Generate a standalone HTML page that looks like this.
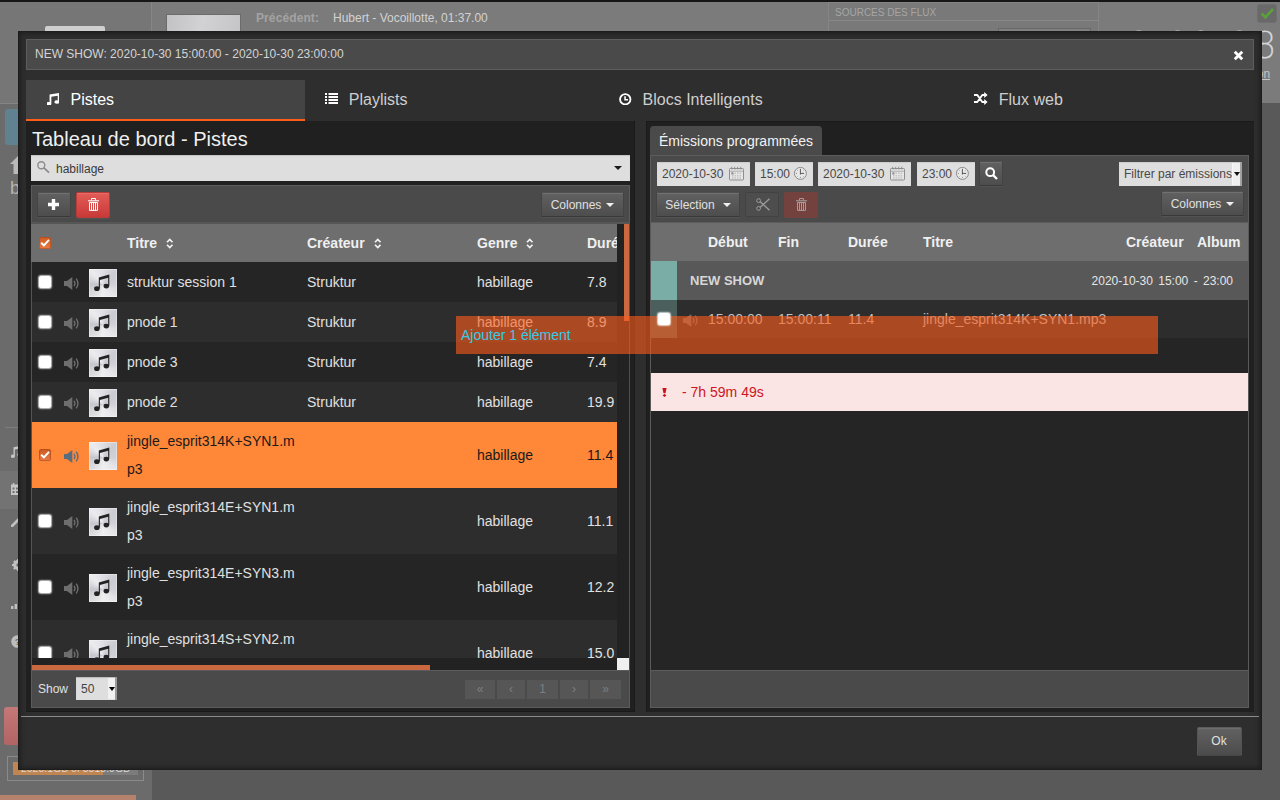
<!DOCTYPE html>
<html lang="fr">
<head>
<meta charset="utf-8">
<title>LibreTime - Ajouter / Supprimer le contenu</title>
<style>
*{box-sizing:border-box;margin:0;padding:0}
html,body{width:1280px;height:800px;overflow:hidden}
body{font-family:"Liberation Sans",Arial,sans-serif;font-size:13px;color:#e0e0e0;background:#595959;position:relative}
.abs{position:absolute}
/* ---------- dimmed page behind the modal ---------- */
#bg{position:absolute;left:0;top:0;width:1280px;height:800px;overflow:hidden;background:#595959}
#bg .topbar{left:0;top:0;width:1280px;height:103px;background:#7b7b7b}
#bg .blackline{left:0;top:0;width:1280px;height:2px;background:#161616}
#bg .side{left:0;top:0;width:152px;height:800px;background:#6b6b6b}
#bg .sidetop{left:0;top:2px;width:152px;height:101px;background:#767676;border-right:1px solid #868686}
/* ---------- dialog ---------- */
#dlg{position:absolute;left:18px;top:31px;width:1244px;height:739px;background:#2e2e2e;box-shadow:inset 0 0 5px 2px #1c1c1c, inset 0 0 0 1px #222}
#title{left:8px;top:8px;width:1228px;height:31px;background:#4a4a4a;border:1px solid #5e5e5e;color:#d4d4d4;font-size:12px;line-height:29px;padding-left:8px}

#close{left:1214.700px;top:18.500px;width:11px;height:11px}
/* tabs */
#tabs{left:8px;top:49px;width:1228px;height:41px;display:flex}
#tabs .tab{flex:1 1 auto;height:41px;padding:0 21px 0 20px;font-size:16px;line-height:40px;color:#cecece;white-space:nowrap;border-bottom:2px solid transparent}
#tabs .tab.active{background:#444;border-bottom:2px solid #ff5d1a;color:#fff}
#tabs .tab svg{display:inline-block;vertical-align:middle;position:relative;top:-2px}
/* left panel */
#lp{left:8px;top:90px;width:609px;height:591px;background:#202020;box-shadow:inset -1px -1px 0 #1a1a1a}
#lp h2{position:absolute;left:6px;top:6px;font-size:20px;font-weight:normal;color:#efefef;line-height:24px;white-space:nowrap}
#search{left:5px;top:34px;width:599px;height:26px;background:#dedede;box-shadow:inset 0 1px 1px #c4c4c4;color:#3a3a3a;font-size:12px;line-height:28px;padding-left:25px}
.tb{background:#4a4a4a;border:1px solid #5c5c5c}
#ltb{left:5px;top:64px;width:599px;height:38px}
.btn{position:absolute;margin:-.5px 0 0 -1px;height:25px;border:1px solid #3c3c3c;border-color:#505050 #444 #393939 #444;border-radius:1.500px;background:linear-gradient(#616161,#4d4d4d);box-shadow:inset 0 1px 0 rgba(255,255,255,.10),0 1px 0 rgba(255,255,255,.05);color:#e0e0e0;font-size:12px;line-height:25px;text-align:center;white-space:nowrap}
.btn.red{background:linear-gradient(#e35c58,#c83a37);border-color:#b93b38}
.caret{display:inline-block;width:0;height:0;border-left:4px solid transparent;border-right:4px solid transparent;border-top:4px solid #f0f0f0;vertical-align:middle;margin-left:5px;position:relative;top:0}

/* left table */
#lt{left:6px;top:103px;width:585px;height:434px;overflow:hidden;background:#252525}
#lt .hd{position:absolute;left:0;top:0;width:585px;height:38px;background:#6e6e6e;font-weight:bold;font-size:14px;color:#f0f0f0;line-height:38px}
#lt .r{position:absolute;left:0;width:585px;font-size:14px;color:#e0e0e0;line-height:28px}
#lt .r.e{background:#2d2d2d}
#lt .r.o{background:#252525}
#lt .r.sel{background:#ff8738;color:#1a1a1a}
#lt .c{position:absolute;white-space:nowrap;top:50%;transform:translateY(-50%)}
#lt .c1{left:95px}#lt .c2{left:275px}#lt .c3{left:445px}#lt .c4{left:555px}
#lt .hd .c{top:0;transform:none}
.cb{position:absolute;left:7px;width:12px;height:12px;background:#fff;border-radius:2.5px;box-shadow:0 0 1.500px .5px rgba(255,255,255,.75);top:50%;margin-top:-6px}
.cb.on{left:7px;width:12px;height:12px;margin-top:-6px;background:linear-gradient(#cf5a22,#e67c47);box-shadow:inset 0 0 0 1px rgba(170,70,20,.55)}
.spk{position:absolute;left:32px;top:50%;margin-top:-5.500px;width:16px;height:13px}
.th{position:absolute;left:57px;top:50%;margin-top:-13px;width:28px;height:28px;background:conic-gradient(from 0deg at 50% 55%,#dedee3 0deg,#cbcbd2 45deg,#d0d0d7 90deg,#e6e6ea 135deg,#efeff0 180deg,#dcdce0 225deg,#c6c6ce 270deg,#ececf0 318deg,#dedee3 360deg);box-shadow:inset 0 0 0 1px rgba(255,255,255,.35)}
.th svg{position:absolute;left:0;top:0}
.srt{display:inline-block;vertical-align:middle;margin-left:9px;position:relative;top:-1px}
#vtrack{left:591px;top:103px;width:12px;height:434px;background:#222}
#vthumb{left:598px;top:103px;width:5px;height:97px;background:#ca6840}
#htrack{left:6px;top:537px;width:585px;height:12px;background:#222}
#hthumb{left:6px;top:544px;width:398px;height:5px;background:#ca6840}
#corner{left:591px;top:537px;width:12px;height:12px;background:#f0f0f0}
#lft{left:5px;top:549px;width:599px;height:38px;font-size:13px;color:#e0e0e0}

/* right panel */
#rp{left:628px;top:90px;width:608px;height:591px;background:#202020;box-shadow:inset 1px 1px 0 #1a1a1a}
#rtab{left:4px;top:5px;width:172px;height:30px;background:#4a4a4a;border-radius:4px 4px 0 0;font-size:14px;line-height:31px;color:#f2f2f2;padding-left:9px;white-space:nowrap}
#rtb{left:4px;top:34px;width:599px;height:68px}
.inp{position:absolute;top:6px;height:24px;background:#dedede;box-shadow:inset 0 1px 1px #cdcdcd;color:#484848;font-size:12px;line-height:24px;padding-left:5px;white-space:nowrap}
.inp svg{position:absolute;top:4px}
#rt{left:4px;top:102px;width:599px;height:447px;background:#252525;overflow:hidden;border-left:1px solid #5a5a5a;border-right:1px solid #5a5a5a}
#rt .hd{position:absolute;left:0;top:0;width:598px;height:38px;background:#6e6e6e;font-weight:bold;font-size:14px;color:#f0f0f0;line-height:38px}
#rt .hd span{position:absolute;top:0;white-space:nowrap}
#rt .show{position:absolute;left:0;top:38px;width:598px;height:39px;background:#585858;line-height:39px;font-size:13px;color:#e6e6e6}
#rt .show b{position:absolute;left:39px;color:#d6d6d6}
#rt .show i{position:absolute;left:0;top:0;width:26px;height:39px;background:#7aada5}
#rt .show span{position:absolute;right:16px;top:1.300px;font-size:12px;word-spacing:2px}
#rt .trk{position:absolute;left:0;top:77px;width:598px;height:38px;background:#2d2d2d;line-height:38px;font-size:14px;color:#c2c2c2}
#rt .trk i{position:absolute;left:0;top:0;width:26px;height:38px;background:#4b5f5c}
#rt .trk span{position:absolute;top:0;white-space:nowrap}
#rt .warn{position:absolute;left:0;top:150px;width:598px;height:38px;background:#fae4e4;color:#cf141b;font-size:14px;line-height:38px}
#rt .warn span{position:absolute;left:31px}
#rft{left:4px;top:549px;width:599px;height:38px}
#sep{left:3px;top:685px;width:1238px;height:1px;background:#8c8c8c}
#ok{left:1179.500px;top:696.500px;width:45px;height:29px;line-height:26px;font-size:12px;background:linear-gradient(#626262,#4b4b4b);border-color:#5c5c5c #535353 #474747 #555;box-shadow:inset 0 1px 0 rgba(255,255,255,.08)}
#helper{position:absolute;left:456px;top:316px;width:702px;height:38px;background:rgba(255,93,26,.6);color:#33cbe8;font-size:14px;line-height:38px;padding-left:5px;z-index:50}

.sel50{position:absolute;left:44px;top:6px;width:41px;height:23px;background:#dedede;box-shadow:inset 0 1px 1px #bbb;color:#444;font-size:12px;line-height:25px;padding-left:5px}
.sel50 i{position:absolute;right:2px;top:1px;width:7px;height:21px;background:#f1f1f1}
.sel50 b{position:absolute;right:2.500px;top:10px;border-left:3.500px solid transparent;border-right:3.500px solid transparent;border-top:4px solid #000}
.sel50:after{content:"";position:absolute;right:0;top:0;width:2px;height:23px;background:#9a9a9a}
.pg{position:absolute;top:8.500px;height:19.500px;background:#565656;color:#7e7e7e;font-size:12px;line-height:19px;text-align:center}
</style>
</head>
<body>
<div id="bg">
  <div class="abs topbar"></div>
  <div class="abs side"></div>
  <div class="abs sidetop"></div>
  <div class="abs blackline"></div>
  <div class="abs" style="left:45px;top:26px;width:60px;height:10px;background:#cfcfcf;border-radius:2px 2px 0 0"></div>
  <div class="abs" style="left:166px;top:14px;width:75px;height:40px;background:linear-gradient(100deg,#c2c2c6,#d2d2d4 45%,#c4c4c8);border:1px solid #6c6c6c"></div>
  <div class="abs" style="left:256px;top:10.700px;font-size:12px;font-weight:bold;color:#a3a3a3;line-height:14px;letter-spacing:.1px">Précédent:</div>
  <div class="abs" style="left:333px;top:10.700px;font-size:12px;color:#d2d2d2;line-height:14px;white-space:nowrap">Hubert - Vocoillotte, 01:37.00</div>
  <div class="abs" style="left:828px;top:2px;width:271px;height:70px;background:#797979;border:1px solid #858585">
    <div style="height:18px;border-bottom:1px solid #898989;font-size:10px;line-height:19px;padding-left:6px;color:#a6a6a6">SOURCES DES FLUX</div>
    <div class="abs" style="left:169px;top:25px;width:93px;height:20px;border:1px solid #666;background:#818181"></div>
  </div>
  <div class="abs" style="left:1257px;top:4px;width:20px;height:19px;background:#696969;border-radius:3px;border:1px solid #6f6f6f"><svg width="18" height="17" viewBox="0 0 18 17" style="display:block"><path d="M3.500 8.500L7.400 12.300L15 4" fill="none" stroke="#5ca03a" stroke-width="2.600"/></svg></div>
  <div class="abs" style="left:1100px;top:23.500px;width:177.500px;text-align:right;font-size:37px;line-height:44px;color:#d3d3d8;white-space:nowrap;font-family:'DejaVu Sans Light','DejaVu Sans','Liberation Sans',sans-serif;font-weight:200;letter-spacing:1px">13:02:38</div>
  <div class="abs" style="left:1200px;top:67px;width:70px;text-align:right;font-size:12px;line-height:14px;color:#c4c4c4;text-decoration:underline;white-space:nowrap">Déconnexion</div>
  <div class="abs" style="left:0;top:103px;width:152px;height:1px;background:#858585"></div>
  <div class="abs" style="left:5px;top:109px;width:142px;height:36px;background:#5f8190;border-radius:3px"></div>
  <svg class="abs" style="left:10px;top:156px" width="16" height="18" viewBox="0 0 16 18"><path d="M8 0L16 8H12.500V18H3.500V8H0Z" fill="#b9b9b9"/></svg>
  <div class="abs" style="left:10px;top:178px;font-size:18px;line-height:20px;color:#b4b4b4">bibliothèque</div>
  <div class="abs" style="left:5px;top:427px;width:142px;height:1px;background:#7e7e7e"></div>
  <div class="abs" style="left:0;top:471px;width:152px;height:38px;background:#737373"></div>
  <svg class="abs" style="left:9px;top:444.500px" width="14" height="14" viewBox="0 0 14 14"><path d="M4.500 2.200 L12.300 0.800 V9.600 A2 1.700 0 1 1 10.900 8 V3.600 L5.900 4.500 V11.300 A2 1.700 0 1 1 4.500 9.700 Z" fill="#c6c6c6"/></svg>
  <svg class="abs" style="left:11px;top:483px" width="12" height="12" viewBox="0 0 12 12"><path d="M0 1.500H12V12H0Z" fill="#c6c6c6"/><path d="M2.500 0V2.500M9.500 0V2.500" stroke="#c6c6c6" stroke-width="1.500"/><path d="M1.500 4.500h2v2h-2zM5 4.500h2v2H5zM8.500 4.500h2v2h-2zM1.500 8h2v2h-2zM5 8h2v2H5zM8.500 8h2v2h-2z" fill="#737373"/></svg>
  <svg class="abs" style="left:11px;top:515px" width="12" height="12" viewBox="0 0 12 12"><path d="M1 11L9 3" stroke="#c0c0c0" stroke-width="2.600" stroke-linecap="round"/><circle cx="9.500" cy="2.500" r="2.400" fill="#c0c0c0"/></svg>
  <svg class="abs" style="left:12px;top:559px" width="12" height="12" viewBox="0 0 12 12"><circle cx="6" cy="6" r="3.600" fill="none" stroke="#c0c0c0" stroke-width="2.600"/><path d="M6 0V12M0 6H12M1.800 1.800L10.200 10.200M10.200 1.800L1.800 10.200" stroke="#c0c0c0" stroke-width="1.800"/><circle cx="6" cy="6" r="1.700" fill="#6b6b6b"/></svg>
  <svg class="abs" style="left:11px;top:599px" width="12" height="10" viewBox="0 0 12 10"><path d="M0 7h2.400v3H0zM3.600 5h2.400v5H3.600zM7.200 2.500h2.400V10H7.200z" fill="#c0c0c0"/></svg>
  <svg class="abs" style="left:11px;top:635px" width="13" height="13" viewBox="0 0 13 13"><circle cx="6.500" cy="6.500" r="6.300" fill="#bdbdbd"/><text x="6.500" y="10" font-size="9" font-weight="bold" text-anchor="middle" fill="#6b6b6b" font-family="Liberation Sans,sans-serif">?</text></svg>
  <div class="abs" style="left:4px;top:707px;width:143px;height:38px;border-radius:3px;background:linear-gradient(#c47878,#b26464)"></div>
  <div class="abs" style="left:7px;top:756px;width:137px;height:25px;border:1px solid #8a8a8a">
    <div class="abs" style="left:5px;top:5px;width:125px;height:13px;background:#7c7c7c"></div>
    <div class="abs" style="left:5px;top:5px;width:90px;height:13px;background:#c08550"></div>
    <div class="abs" style="left:5px;top:5px;width:125px;height:13px;font-size:10.500px;line-height:13px;text-align:center;color:#d8d8d8;white-space:nowrap">2025.1GB of 3518.9GB</div>
  </div>
  <div class="abs" style="left:0;top:795px;width:136px;height:5px;background:#b5826e"></div>
</div>
<div id="dlg">
  <div id="title" class="abs">NEW SHOW: 2020-10-30 15:00:00 - 2020-10-30 23:00:00</div>

  <svg id="close" class="abs" viewBox="0 0 10 10"><path d="M1.6 1.6 L8.4 8.4 M8.4 1.6 L1.6 8.4" stroke="#fff" stroke-width="2.6" stroke-linecap="butt"/></svg>
  <div id="tabs" class="abs">
    <div class="tab active"><svg width="12.500" height="12.500" viewBox="2.500 0.800 9.800 12.200" preserveAspectRatio="none" style="margin-left:.5px;margin-right:11.500px"><path d="M4.500 2.200 L12.300 0.800 V9.600 A2 1.700 0 1 1 10.900 8 V3.600 L5.900 4.500 V11.300 A2 1.700 0 1 1 4.500 9.700 Z" fill="#fff"/></svg>Pistes</div>
    <div class="tab"><svg width="13" height="12" viewBox="0 0 13 12" style="margin-right:10.500px"><path d="M0 1h2v2H0zM3.500 1H13v2H3.500zM0 4h2v2H0zM3.500 4H13v2H3.500zM0 7h2v2H0zM3.500 7H13v2H3.500zM0 10h2v2H0zM3.500 10H13v2H3.500z" fill="#fff" transform="translate(0,-1)"/></svg>Playlists</div>
    <div class="tab"><svg width="12.500" height="12.500" viewBox="0 0 13 13" style="margin-left:.6px;margin-right:10.800px"><circle cx="6.500" cy="6.500" r="5.400" fill="none" stroke="#fff" stroke-width="1.900"/><path d="M6.300 3.400V7H9.300" fill="none" stroke="#fff" stroke-width="1.600"/></svg>Blocs Intelligents</div>
    <div class="tab"><svg width="13.600" height="13" viewBox="0 -0.500 13.600 13" style="margin-left:.6px;margin-right:10.700px"><path d="M0 2.500H3.300L8.300 9.500H10.800M0 9.500H3.300L8.300 2.500H10.800" fill="none" stroke="#fff" stroke-width="1.900" stroke-linejoin="round"/><path d="M10.200 -0.400L13.600 2.500L10.200 5.400zM10.200 6.600L13.600 9.500L10.200 12.400z" fill="#fff"/></svg>Flux web</div>
  </div>
  <div id="lp" class="abs">
    <h2>Tableau de bord - Pistes</h2>
    <div id="search" class="abs"><svg width="13" height="13" viewBox="0 0 13 13" style="position:absolute;left:6px;top:6px"><circle cx="4.300" cy="4.300" r="3.500" fill="none" stroke="#8c8c8c" stroke-width="1.400"/><path d="M6.900 6.900L12 11.700" stroke="#8c8c8c" stroke-width="1.800"/></svg>habillage<span style="position:absolute;right:8px;top:11px;border-left:4px solid transparent;border-right:4px solid transparent;border-top:4px solid #1a1a1a"></span></div>
    <div id="ltb" class="abs tb">
      <div class="btn" style="left:6px;top:6px;width:34px"><svg width="11" height="11" viewBox="0 0 11 11" style="position:absolute;left:10px;top:6px"><path d="M3.800 0h3.400v3.800H11v3.400H7.200V11H3.800V7.200H0V3.800h3.800z" fill="#fff"/></svg></div>
      <div class="btn red" style="left:45px;top:6px;width:34px;height:26px"><svg width="11" height="13" viewBox="0 0 11 13" style="position:absolute;left:11px;top:5px"><path d="M3.500 2.300V0.500H7.500V2.300" fill="none" stroke="#fff" stroke-width="1"/><path d="M0 2.800H11" stroke="#fff" stroke-width="1.100"/><path d="M1.500 4.500H9.500V12.400H1.500Z" fill="none" stroke="#fff" stroke-width="1"/><path d="M3.500 4.500V12.400M5.500 4.500V12.400M7.500 4.500V12.400" stroke="#fff" stroke-width="1"/></svg></div>
      <div class="btn" style="left:510px;top:6px;width:83px">Colonnes<span class="caret"></span></div>
    </div>
    <div id="lt" class="abs">
    <div class="hd"><span class="cb on" style="top:19px"><svg width="12" height="12" viewBox="0 0 12 12" style="display:block"><path d="M2.200 5.800L4.900 8.400L10 2.900" fill="none" stroke="#fff" stroke-width="2"/></svg></span><span class="c c1">Titre<svg class="srt" width="7.500" height="11" viewBox="0 0 8 12"><path d="M1 4.600L4 1.600L7 4.600M1 7.400L4 10.400L7 7.400" fill="none" stroke="#f4f4f4" stroke-width="1.800"/></svg></span><span class="c c2">Créateur<svg class="srt" width="7.500" height="11" viewBox="0 0 8 12"><path d="M1 4.600L4 1.600L7 4.600M1 7.400L4 10.400L7 7.400" fill="none" stroke="#f4f4f4" stroke-width="1.800"/></svg></span><span class="c c3">Genre<svg class="srt" width="7.500" height="11" viewBox="0 0 8 12"><path d="M1 4.600L4 1.600L7 4.600M1 7.400L4 10.400L7 7.400" fill="none" stroke="#f4f4f4" stroke-width="1.800"/></svg></span><span class="c c4">Durée</span></div>
    <div class="r o" style="top:38px;height:40px"><span class="cb"></span><svg class="spk" viewBox="0 0 16 13"><path d="M0 4h3L8.300 0V13L3 9H0z" fill="#6e6e6e"/><path d="M10 3.800Q11.800 6.500 10 9.200M12.200 1.600Q15.600 6.500 12.200 11.400" fill="none" stroke="#6e6e6e" stroke-width="1.400"/></svg><div class="th"><svg width="28" height="28" viewBox="0 0 28 28"><path d="M9.800 8.400L20.300 5.400V16.800H19.200V8.800L10.900 11.100V19.400H9.800Z" fill="#222"/><ellipse cx="7.900" cy="19.700" rx="2.800" ry="2.400" fill="#222"/><ellipse cx="17.300" cy="17.100" rx="2.800" ry="2.400" fill="#222"/></svg></div><span class="c c1">struktur session 1</span><span class="c c2">Struktur</span><span class="c c3">habillage</span><span class="c c4">7.8</span></div>
    <div class="r e" style="top:78px;height:40px"><span class="cb"></span><svg class="spk" viewBox="0 0 16 13"><path d="M0 4h3L8.300 0V13L3 9H0z" fill="#6e6e6e"/><path d="M10 3.800Q11.800 6.500 10 9.200M12.200 1.600Q15.600 6.500 12.200 11.400" fill="none" stroke="#6e6e6e" stroke-width="1.400"/></svg><div class="th"><svg width="28" height="28" viewBox="0 0 28 28"><path d="M9.800 8.400L20.300 5.400V16.800H19.200V8.800L10.900 11.100V19.400H9.800Z" fill="#222"/><ellipse cx="7.900" cy="19.700" rx="2.800" ry="2.400" fill="#222"/><ellipse cx="17.300" cy="17.100" rx="2.800" ry="2.400" fill="#222"/></svg></div><span class="c c1">pnode 1</span><span class="c c2">Struktur</span><span class="c c3">habillage</span><span class="c c4">8.9</span></div>
    <div class="r o" style="top:118px;height:40px"><span class="cb"></span><svg class="spk" viewBox="0 0 16 13"><path d="M0 4h3L8.300 0V13L3 9H0z" fill="#6e6e6e"/><path d="M10 3.800Q11.800 6.500 10 9.200M12.200 1.600Q15.600 6.500 12.200 11.400" fill="none" stroke="#6e6e6e" stroke-width="1.400"/></svg><div class="th"><svg width="28" height="28" viewBox="0 0 28 28"><path d="M9.800 8.400L20.300 5.400V16.800H19.200V8.800L10.900 11.100V19.400H9.800Z" fill="#222"/><ellipse cx="7.900" cy="19.700" rx="2.800" ry="2.400" fill="#222"/><ellipse cx="17.300" cy="17.100" rx="2.800" ry="2.400" fill="#222"/></svg></div><span class="c c1">pnode 3</span><span class="c c2">Struktur</span><span class="c c3">habillage</span><span class="c c4">7.4</span></div>
    <div class="r e" style="top:158px;height:40px"><span class="cb"></span><svg class="spk" viewBox="0 0 16 13"><path d="M0 4h3L8.300 0V13L3 9H0z" fill="#6e6e6e"/><path d="M10 3.800Q11.800 6.500 10 9.200M12.200 1.600Q15.600 6.500 12.200 11.400" fill="none" stroke="#6e6e6e" stroke-width="1.400"/></svg><div class="th"><svg width="28" height="28" viewBox="0 0 28 28"><path d="M9.800 8.400L20.300 5.400V16.800H19.200V8.800L10.900 11.100V19.400H9.800Z" fill="#222"/><ellipse cx="7.900" cy="19.700" rx="2.800" ry="2.400" fill="#222"/><ellipse cx="17.300" cy="17.100" rx="2.800" ry="2.400" fill="#222"/></svg></div><span class="c c1">pnode 2</span><span class="c c2">Struktur</span><span class="c c3">habillage</span><span class="c c4">19.9</span></div>
    <div class="r sel" style="top:198px;height:66px"><span class="cb on"><svg width="12" height="12" viewBox="0 0 12 12" style="display:block"><path d="M2.200 5.800L4.900 8.400L10 2.900" fill="none" stroke="#fff" stroke-width="2"/></svg></span><svg class="spk" viewBox="0 0 16 13"><path d="M0 4h3L8.300 0V13L3 9H0z" fill="#5b6d7c"/><path d="M10 3.800Q11.800 6.500 10 9.200M12.200 1.600Q15.600 6.500 12.200 11.400" fill="none" stroke="#5b6d7c" stroke-width="1.400"/></svg><div class="th"><svg width="28" height="28" viewBox="0 0 28 28"><path d="M9.800 8.400L20.300 5.400V16.800H19.200V8.800L10.900 11.100V19.400H9.800Z" fill="#222"/><ellipse cx="7.900" cy="19.700" rx="2.800" ry="2.400" fill="#222"/><ellipse cx="17.300" cy="17.100" rx="2.800" ry="2.400" fill="#222"/></svg></div><span class="c c1">jingle_esprit314K+SYN1.m<br>p3</span><span class="c c2"></span><span class="c c3">habillage</span><span class="c c4">11.4</span></div>
    <div class="r e" style="top:264px;height:66px"><span class="cb"></span><svg class="spk" viewBox="0 0 16 13"><path d="M0 4h3L8.300 0V13L3 9H0z" fill="#6e6e6e"/><path d="M10 3.800Q11.800 6.500 10 9.200M12.200 1.600Q15.600 6.500 12.200 11.400" fill="none" stroke="#6e6e6e" stroke-width="1.400"/></svg><div class="th"><svg width="28" height="28" viewBox="0 0 28 28"><path d="M9.800 8.400L20.300 5.400V16.800H19.200V8.800L10.900 11.100V19.400H9.800Z" fill="#222"/><ellipse cx="7.900" cy="19.700" rx="2.800" ry="2.400" fill="#222"/><ellipse cx="17.300" cy="17.100" rx="2.800" ry="2.400" fill="#222"/></svg></div><span class="c c1">jingle_esprit314E+SYN1.m<br>p3</span><span class="c c2"></span><span class="c c3">habillage</span><span class="c c4">11.1</span></div>
    <div class="r o" style="top:330px;height:66px"><span class="cb"></span><svg class="spk" viewBox="0 0 16 13"><path d="M0 4h3L8.300 0V13L3 9H0z" fill="#6e6e6e"/><path d="M10 3.800Q11.800 6.500 10 9.200M12.200 1.600Q15.600 6.500 12.200 11.400" fill="none" stroke="#6e6e6e" stroke-width="1.400"/></svg><div class="th"><svg width="28" height="28" viewBox="0 0 28 28"><path d="M9.800 8.400L20.300 5.400V16.800H19.200V8.800L10.900 11.100V19.400H9.800Z" fill="#222"/><ellipse cx="7.900" cy="19.700" rx="2.800" ry="2.400" fill="#222"/><ellipse cx="17.300" cy="17.100" rx="2.800" ry="2.400" fill="#222"/></svg></div><span class="c c1">jingle_esprit314E+SYN3.m<br>p3</span><span class="c c2"></span><span class="c c3">habillage</span><span class="c c4">12.2</span></div>
    <div class="r e" style="top:396px;height:66px"><span class="cb"></span><svg class="spk" viewBox="0 0 16 13"><path d="M0 4h3L8.300 0V13L3 9H0z" fill="#6e6e6e"/><path d="M10 3.800Q11.800 6.500 10 9.200M12.200 1.600Q15.600 6.500 12.200 11.400" fill="none" stroke="#6e6e6e" stroke-width="1.400"/></svg><div class="th"><svg width="28" height="28" viewBox="0 0 28 28"><path d="M9.800 8.400L20.300 5.400V16.800H19.200V8.800L10.900 11.100V19.400H9.800Z" fill="#222"/><ellipse cx="7.900" cy="19.700" rx="2.800" ry="2.400" fill="#222"/><ellipse cx="17.300" cy="17.100" rx="2.800" ry="2.400" fill="#222"/></svg></div><span class="c c1">jingle_esprit314S+SYN2.m<br>p3</span><span class="c c2"></span><span class="c c3">habillage</span><span class="c c4">15.0</span></div>
    </div>
    <div class="abs" style="left:5px;top:101px;width:599px;height:2px;background:#565656"></div><div class="abs" style="left:5px;top:103px;width:1px;height:446px;background:#555"></div><div class="abs" style="left:5px;top:103px;width:1px;height:38px;background:#6e6e6e"></div><div class="abs" style="left:603px;top:103px;width:1px;height:446px;background:#4e4e4e"></div><div id="vtrack" class="abs"></div><div id="vthumb" class="abs"></div><div id="htrack" class="abs"></div><div id="hthumb" class="abs"></div><div id="corner" class="abs"></div>
    <div id="lft" class="abs tb"><span style="position:absolute;left:6px;top:0;line-height:36px;font-size:12px">Show</span><span class="sel50">50<i></i><b></b></span><span class="pg" style="left:433px;width:30px">«</span><span class="pg" style="left:465px;width:28px">‹</span><span class="pg" style="left:495px;width:31px">1</span><span class="pg" style="left:528px;width:28px">›</span><span class="pg" style="left:558px;width:31px">»</span></div>
  </div>

  <div id="rp" class="abs">
    <div id="rtab" class="abs">Émissions programmées</div>
    <div id="rtb" class="abs tb">
      <div class="inp" style="left:6px;width:93px">2020-10-30<svg width="15" height="15" viewBox="0 0 15 15" style="left:72px"><rect x="0.500" y="2.500" width="14" height="11.500" rx=".8" fill="#e6e6e6" stroke="#8e8e8e" stroke-width="1"/><path d="M0.500 5.200H14.500" stroke="#9a9a9a" stroke-width=".8"/><path d="M3 0.700Q1.800 1.800 3 3.600M6 0.700Q4.800 1.800 6 3.600M9 0.700Q7.800 1.800 9 3.600M12 0.700Q10.800 1.800 12 3.600" fill="none" stroke="#8a8a8a" stroke-width=".9"/><path d="M2.300 6.300h2.200v2.200H2.300z" fill="#8f8f8f"/><path d="M5.500 6.600h1.500v1.500H5.500zM8 6.600h1.500v1.500H8zM10.500 6.600h1.500v1.500h-1.500zM3 9h1.500v1.500H3zM5.500 9h1.500v1.500H5.500zM8 9h1.500v1.500H8zM10.500 9h1.500v1.500h-1.500zM3 11.300h1.500v1.500H3zM5.500 11.300h1.500v1.500H5.500zM8 11.300h1.500v1.500H8zM10.500 11.300h1.500v1.500h-1.500z" fill="#c4c4c4"/></svg></div>
      <div class="inp" style="left:104px;width:58px">15:00<svg width="15" height="15" viewBox="0 0 15 15" style="left:38px"><circle cx="7.400" cy="7.400" r="6" fill="#e9e9e9" stroke="#8c8c8c" stroke-width="1"/><path d="M7.400 2.800V8.600M7.400 7.400H11.200" fill="none" stroke="#5a5a5a" stroke-width="1"/><path d="M7.400 10.800V12M2.800 7.400H4M4.300 4.300L4.900 4.900M10.500 4.300L9.900 4.900M4.300 10.500L4.900 9.900M10.500 10.500L9.900 9.900" stroke="#8a8a8a" stroke-width=".9"/></svg></div>
      <div class="inp" style="left:167px;width:93px">2020-10-30<svg width="15" height="15" viewBox="0 0 15 15" style="left:72px"><rect x="0.500" y="2.500" width="14" height="11.500" rx=".8" fill="#e6e6e6" stroke="#8e8e8e" stroke-width="1"/><path d="M0.500 5.200H14.500" stroke="#9a9a9a" stroke-width=".8"/><path d="M3 0.700Q1.800 1.800 3 3.600M6 0.700Q4.800 1.800 6 3.600M9 0.700Q7.800 1.800 9 3.600M12 0.700Q10.800 1.800 12 3.600" fill="none" stroke="#8a8a8a" stroke-width=".9"/><path d="M2.300 6.300h2.200v2.200H2.300z" fill="#8f8f8f"/><path d="M5.500 6.600h1.500v1.500H5.500zM8 6.600h1.500v1.500H8zM10.500 6.600h1.500v1.500h-1.500zM3 9h1.500v1.500H3zM5.500 9h1.500v1.500H5.500zM8 9h1.500v1.500H8zM10.500 9h1.500v1.500h-1.500zM3 11.300h1.500v1.500H3zM5.500 11.300h1.500v1.500H5.500zM8 11.300h1.500v1.500H8zM10.500 11.300h1.500v1.500h-1.500z" fill="#c4c4c4"/></svg></div>
      <div class="inp" style="left:266px;width:58px">23:00<svg width="15" height="15" viewBox="0 0 15 15" style="left:38px"><circle cx="7.400" cy="7.400" r="6" fill="#e9e9e9" stroke="#8c8c8c" stroke-width="1"/><path d="M7.400 2.800V8.600M7.400 7.400H11.200" fill="none" stroke="#5a5a5a" stroke-width="1"/><path d="M7.400 10.800V12M2.800 7.400H4M4.300 4.300L4.900 4.900M10.500 4.300L9.900 4.900M4.300 10.500L4.900 9.900M10.500 10.500L9.900 9.900" stroke="#8a8a8a" stroke-width=".9"/></svg></div>
      <div class="btn" style="left:329px;top:5.500px;width:24px;height:25px"><svg width="13" height="13" viewBox="0 0 13 13" style="position:absolute;left:5px;top:5px"><circle cx="5.200" cy="5.200" r="3.900" fill="none" stroke="#fff" stroke-width="2"/><path d="M8 8L12 12" stroke="#fff" stroke-width="2.400"/></svg></div>
      <div class="inp" style="left:468px;width:123px">Filtrer par émissions<span style="position:absolute;right:2px;top:1px;width:8px;height:22px;background:#efefef;border-left:1px solid #f8f8f8"></span><span style="position:absolute;right:0;top:0;width:2px;height:24px;background:#a2a2a2"></span><span style="position:absolute;right:2.500px;top:10px;border-left:3.500px solid transparent;border-right:3.500px solid transparent;border-top:4px solid #111"></span></div>
      <div class="btn" style="left:6px;top:36px;width:84px">Sélection<span class="caret" style="margin-left:8px"></span></div>
      <div class="btn" style="left:95px;top:36px;width:34px;background:#4d4d4d;border-color:#424242;box-shadow:none"><svg width="14" height="13" viewBox="0 0 14 13" style="position:absolute;left:10px;top:5px"><circle cx="2.600" cy="2.600" r="1.900" fill="none" stroke="#9c9c9c" stroke-width="1"/><circle cx="2.600" cy="10.400" r="1.900" fill="none" stroke="#9c9c9c" stroke-width="1"/><path d="M4.200 3.700L13.500 12.200M4.200 9.300L13.500 0.800" stroke="#9c9c9c" stroke-width="1.300"/></svg></div>
      <div class="btn" style="left:134px;top:36px;width:34px;height:26px;background:#73423f;border-color:#73423f;box-shadow:none"><svg width="11" height="13" viewBox="0 0 11 13" style="position:absolute;left:11px;top:5px"><path d="M3.500 2.300V0.500H7.500V2.300" fill="none" stroke="#a59b9a" stroke-width="1"/><path d="M0 2.800H11" stroke="#a59b9a" stroke-width="1.100"/><path d="M1.500 4.500H9.500V12.400H1.500Z" fill="none" stroke="#a59b9a" stroke-width="1"/><path d="M3.500 4.500V12.400M5.500 4.500V12.400M7.500 4.500V12.400" stroke="#a59b9a" stroke-width="1"/></svg></div>
      <div class="btn" style="left:511px;top:35px;width:83px">Colonnes<span class="caret"></span></div>
    </div>
    <div id="rt" class="abs">
      <div class="hd"><span style="left:57px">Début</span><span style="left:127px">Fin</span><span style="left:197px">Durée</span><span style="left:272px">Titre</span><span style="left:475px">Créateur</span><span style="left:546px">Album</span></div>
      <div class="show"><i></i><b>NEW SHOW</b><span>2020-10-30 15:00 - 23:00</span></div>
      <div class="trk"><i></i><span class="cb" style="left:7px;top:50%;z-index:60"></span><svg class="spk" viewBox="0 0 16 13" style="left:32px"><path d="M0 4h3L8.300 0V13L3 9H0z" fill="#6e6e6e"/><path d="M10 3.800Q11.800 6.500 10 9.200M12.200 1.600Q15.600 6.500 12.200 11.400" fill="none" stroke="#6e6e6e" stroke-width="1.400"/></svg><span style="left:57px">15:00:00</span><span style="left:127px">15:00:11</span><span style="left:197px">11.4</span><span style="left:272px">jingle_esprit314K+SYN1.mp3</span></div>
      <div class="warn"><svg width="5" height="9" viewBox="0 0 5 9" style="position:absolute;left:11.200px;top:15.300px"><path d="M0.400 0H4.600L3.500 5.300H1.500Z" fill="#d01218"/><path d="M2.500 5.800L4.400 7.400L2.500 9L0.600 7.400Z" fill="#d01218"/></svg><span>- 7h 59m 49s</span></div>
    </div>
    <div id="rft" class="abs tb"></div>
  </div>
  <div id="sep" class="abs"></div>
  <div id="ok" class="btn">Ok</div>
</div>
<div id="helper">Ajouter 1 élément</div>
</body>
</html>
